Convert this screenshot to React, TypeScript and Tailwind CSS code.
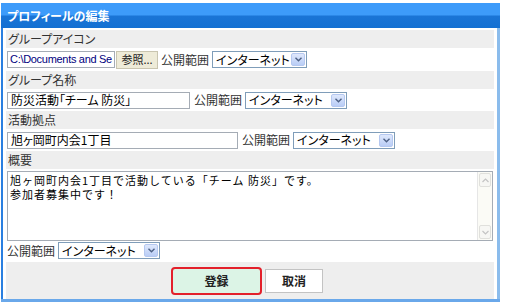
import React from "react";

const font = {
  fontFamily: '"Noto Sans CJK JP", "Liberation Sans", sans-serif',
  fontFeatureSettings: '"palt"',
};

function Label({ children }: { children: React.ReactNode }) {
  return (
    <div className="flex h-[18px] items-center bg-[#eeeeee] pl-[2px] text-[12px] text-[#333]">
      {children}
    </div>
  );
}

function Select({ w = "w-[96px]" }: { w?: string }) {
  return (
    <div className={`flex h-[17px] ${w} items-center border border-[#7f9db9] bg-white`}>
      <span className="min-w-0 flex-1 whitespace-nowrap pl-[3px] text-[12px] leading-none text-black">
        インターネット
      </span>
      <span className="mr-[1px] flex h-[13px] w-[14px] shrink-0 items-center justify-center rounded-[2px] border border-[#b5c8f0] bg-[linear-gradient(#dfe8fc,#b9cdf6)]">
        <svg width="7" height="5" viewBox="0 0 7 5">
          <path d="M0.5 0.8 L3.5 3.8 L6.5 0.8" fill="none" stroke="#4d6185" strokeWidth="1.4" />
        </svg>
      </span>
    </div>
  );
}

function Scope({ w }: { w?: string }) {
  return (
    <div className="flex items-center gap-[3px]">
      <span className="whitespace-nowrap text-[12px] text-[#333]">公開範囲</span>
      <Select w={w} />
    </div>
  );
}

function TextBox({ value, w }: { value: string; w: string }) {
  return (
    <div className={`flex h-[17px] ${w} items-center whitespace-nowrap border border-[#a5acb5] bg-white pl-[3px] text-[12px] leading-none text-black`}>
      {value}
    </div>
  );
}

export default function App() {
  return (
    <div className="h-[306px] w-[505px] bg-white pl-[1px] pt-[3px]" style={font}>
      <div className="w-[499px] border-b-[3px] border-b-[#6aa8ea]">
        <div className="flex h-[25px] items-center bg-[linear-gradient(#3d9bfa_0%,#3d9bfa_46%,#1a74d6_54%,#1470d2_100%)] pl-[6px] text-[12px] font-bold text-white">
          プロフィールの編集
        </div>
        <div className="border-l-2 border-r-[3px] border-l-[#2a7fe0] border-r-[#8bbcec] px-[3px] pt-[2px]">
          <Label>グループアイコン</Label>
          <div className="flex h-[23px] items-center gap-[1px] pl-[1px]">
            <div
              className="flex h-[17px] w-[108px] items-center overflow-hidden whitespace-nowrap border border-[#a5acb5] bg-white pl-[2px] text-[11px] leading-none tracking-[-0.3px] text-[#000080]"
              style={{ fontFamily: '"Liberation Sans", sans-serif' }}
            >
              C:\Documents and Se
            </div>
            <div className="flex h-[18px] w-[42px] items-center justify-center border border-[#c9c5b0] bg-[#eeebd8] text-[11px] text-[#222]">
              参照...
            </div>
            <div className="ml-[2px]">
              <Scope w="w-[95px]" />
            </div>
          </div>
          <Label>グループ名称</Label>
          <div className="flex h-[22px] items-center gap-[4px] pl-[1px]">
            <TextBox value="防災活動「チーム 防災」" w="w-[183px]" />
            <Scope w="w-[102px]" />
          </div>
          <Label>活動拠点</Label>
          <div className="flex h-[22px] items-center gap-[4px] pl-[1px]">
            <TextBox value="旭ヶ岡町内会1丁目" w="w-[231px]" />
            <Scope w="w-[102px]" />
          </div>
          <Label>概要</Label>
          <div className="pl-[1px] pt-[2px]">
            <div className="flex h-[70px] w-[486px] border border-[#a5acb5] bg-white">
              <div
                className="flex-1 pl-[2px] pt-[1px] text-[11px] leading-[14px] tracking-[1px] text-black"
                style={{ fontFamily: '"Noto Sans CJK JP", monospace', fontFeatureSettings: "normal" }}
              >
                <div>旭ヶ岡町内会1丁目で活動している「チーム 防災」です。</div>
                <div>参加者募集中です！</div>
              </div>
              <div className="flex w-[15px] flex-col justify-between border-l border-[#e6e6e6] bg-[#fbfbf6] p-[1px]">
                <div className="flex h-[14px] items-center justify-center rounded-[2px] border border-[#e0e0dc] bg-[#f7f7f4]">
                  <svg width="7" height="5" viewBox="0 0 7 5">
                    <path d="M0.5 4 L3.5 1 L6.5 4" fill="none" stroke="#c4c4c4" strokeWidth="1.2" />
                  </svg>
                </div>
                <div className="flex h-[14px] items-center justify-center rounded-[2px] border border-[#e0e0dc] bg-[#f7f7f4]">
                  <svg width="7" height="5" viewBox="0 0 7 5">
                    <path d="M0.5 1 L3.5 4 L6.5 1" fill="none" stroke="#c4c4c4" strokeWidth="1.2" />
                  </svg>
                </div>
              </div>
            </div>
          </div>
          <div className="flex h-[19px] items-center pl-[1px]">
            <Scope w="w-[102px]" />
          </div>
          <div className="mt-[2px] flex h-[37px] items-center justify-center gap-[3px] bg-[#eeeeee] pr-[6px]">
            <div className="flex h-[28px] w-[91px] items-center justify-center rounded-[4px] border-2 border-[#e3202b] bg-[#dcf4e6] text-[12px] font-bold text-[#222]">
              登録
            </div>
            <div className="flex h-[24px] w-[58px] items-center justify-center border border-[#c3c3c3] bg-white text-[12px] font-bold text-[#222]">
              取消
            </div>
          </div>
        </div>
      </div>
    </div>
  );
}
